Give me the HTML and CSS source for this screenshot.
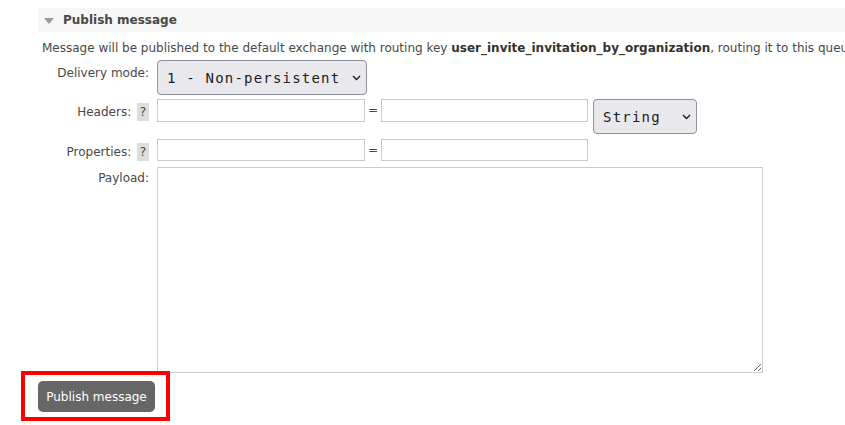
FILE: index.html
```html
<!DOCTYPE html>
<html>
<head>
<meta charset="utf-8">
<link rel="stylesheet" href="styles.css">
</head>
<body>
<div class="page">
  <div class="section-head"><span class="tri"></span>Publish message</div>
  <p class="intro">Message will be published to the default exchange with routing key <b>user_invite_invitation_by_organization</b>, routing it to this queue.</p>
  <div class="form">
    <label class="lbl l1">Delivery mode:</label>
    <div class="ctl r1">
      <div class="sel sel-mode">
        <select><option>1 - Non-persistent</option><option>2 - Persistent</option></select>
        <svg class="chev" width="9" height="6" viewBox="0 0 9 6"><path d="M1 1 L4.5 4.5 L8 1" fill="none" stroke="#1c1b22" stroke-width="1.4"/></svg>
      </div>
    </div>

    <label class="lbl l2">Headers: <span class="help">?</span></label>
    <div class="ctl r2">
      <input class="txt" type="text"><span class="eq">=</span><input class="txt txt2" type="text">
      <div class="sel sel-type">
        <select><option>String</option><option>Number</option><option>Boolean</option></select>
        <svg class="chev" width="9" height="6" viewBox="0 0 9 6"><path d="M1 1 L4.5 4.5 L8 1" fill="none" stroke="#1c1b22" stroke-width="1.4"/></svg>
      </div>
    </div>

    <label class="lbl l3">Properties: <span class="help">?</span></label>
    <div class="ctl r3">
      <input class="txt" type="text"><span class="eq">=</span><input class="txt txt2" type="text">
    </div>

    <label class="lbl l4">Payload:</label>
    <div class="ctl r4">
      <textarea class="payload"></textarea>
    </div>
  </div>
  <div class="btn-wrap"><button class="btn" type="button">Publish message</button></div>
</div>
</body>
</html>
```

FILE: styles.css
```css
html, body {
  margin: 0;
  padding: 0;
  background: #fff;
  overflow: hidden;
}
body {
  font-family: "DejaVu Sans", Verdana, sans-serif;
  font-size: 12px;
  color: #484848;
  width: 845px;
  height: 425px;
}
.page {
  padding-top: 8px;
  white-space: nowrap;
}
.section-head {
  margin-left: 38px;
  height: 24px;
  background: #f7f7f7;
  font-weight: bold;
  color: #484848;
  display: flex;
  align-items: center;
  line-height: 24px;
}
.tri {
  width: 0;
  height: 0;
  border-left: 5px solid transparent;
  border-right: 5px solid transparent;
  border-top: 6px solid #999;
  margin-left: 6px;
  margin-right: 9px;
  margin-top: 1px;
}
.intro {
  margin: 9px 0 0 42px;
  line-height: 14px;
}
.intro b {
  color: #333;
}
.form {
  display: grid;
  grid-template-columns: 111px auto;
  column-gap: 8px;
  margin-left: 38px;
  margin-top: 5px;
}
.lbl {
  text-align: right;
  line-height: 14px;
  color: #484848;
  height: 14px;
}
.l1 { padding-top: 6px; }
.l2 { margin-top: 4px; padding-top: 4px; }
.l3 { margin-top: 5px; padding-top: 4px; }
.l4 { margin-top: 5px; padding-top: 4px; }
.help {
  display: inline-block;
  width: 12px;
  height: 18px;
  line-height: 18px;
  text-align: center;
  background: #ddd;
  color: #484848;
  margin-left: 2px;
  vertical-align: baseline;
}
.ctl {
  display: flex;
  align-items: flex-start;
}
.r2 { margin-top: 4px; }
.r3 { margin-top: 5px; }
.r4 { margin-top: 5px; }

.txt {
  box-sizing: border-box;
  width: 208px;
  height: 23px;
  border: 1px solid #ccc;
  margin: 0;
  padding: 2px 4px;
  font-family: "DejaVu Sans", sans-serif;
  font-size: 12px;
  background: #fff;
}
.r3 .txt { height: 22px; }
.txt2 { width: 207px; }
.eq {
  width: 16px;
  text-align: center;
  line-height: 23px;
  color: #484848;
}
.sel {
  position: relative;
  height: 35px;
}
.sel select {
  appearance: none;
  -webkit-appearance: none;
  box-sizing: border-box;
  height: 35px;
  margin: 0;
  border: 1px solid #8f8f9d;
  border-radius: 4px;
  background: #e9e9ed;
  color: #1c1b22;
  font-family: "DejaVu Sans Mono", monospace;
  font-size: 14px;
  letter-spacing: 1.2px;
  padding: 0 0 0 9px;
  outline: none;
}
.sel-mode select { width: 210px; }
.sel-type { margin-left: 5px; }
.sel-type select { width: 104px; }
.chev {
  position: absolute;
  right: 6px;
  top: 15px;
  pointer-events: none;
}
.payload {
  box-sizing: border-box;
  width: 606px;
  height: 206px;
  border: 1px solid #ccc;
  margin: 0;
  padding: 2px;
  font-family: "DejaVu Sans Mono", monospace;
  font-size: 12px;
  resize: both;
}
.btn-wrap {
  display: inline-block;
  margin: -2px 0 0 21px;
  border: 4px solid #ff0000;
  padding: 6px 11px 5px 13px;
}
.btn {
  display: block;
  box-sizing: border-box;
  width: 117px;
  height: 31px;
  border: none;
  border-radius: 5px;
  background: #666;
  color: #fff;
  font-family: "DejaVu Sans", sans-serif;
  font-size: 12px;
  padding: 0;
}
```
